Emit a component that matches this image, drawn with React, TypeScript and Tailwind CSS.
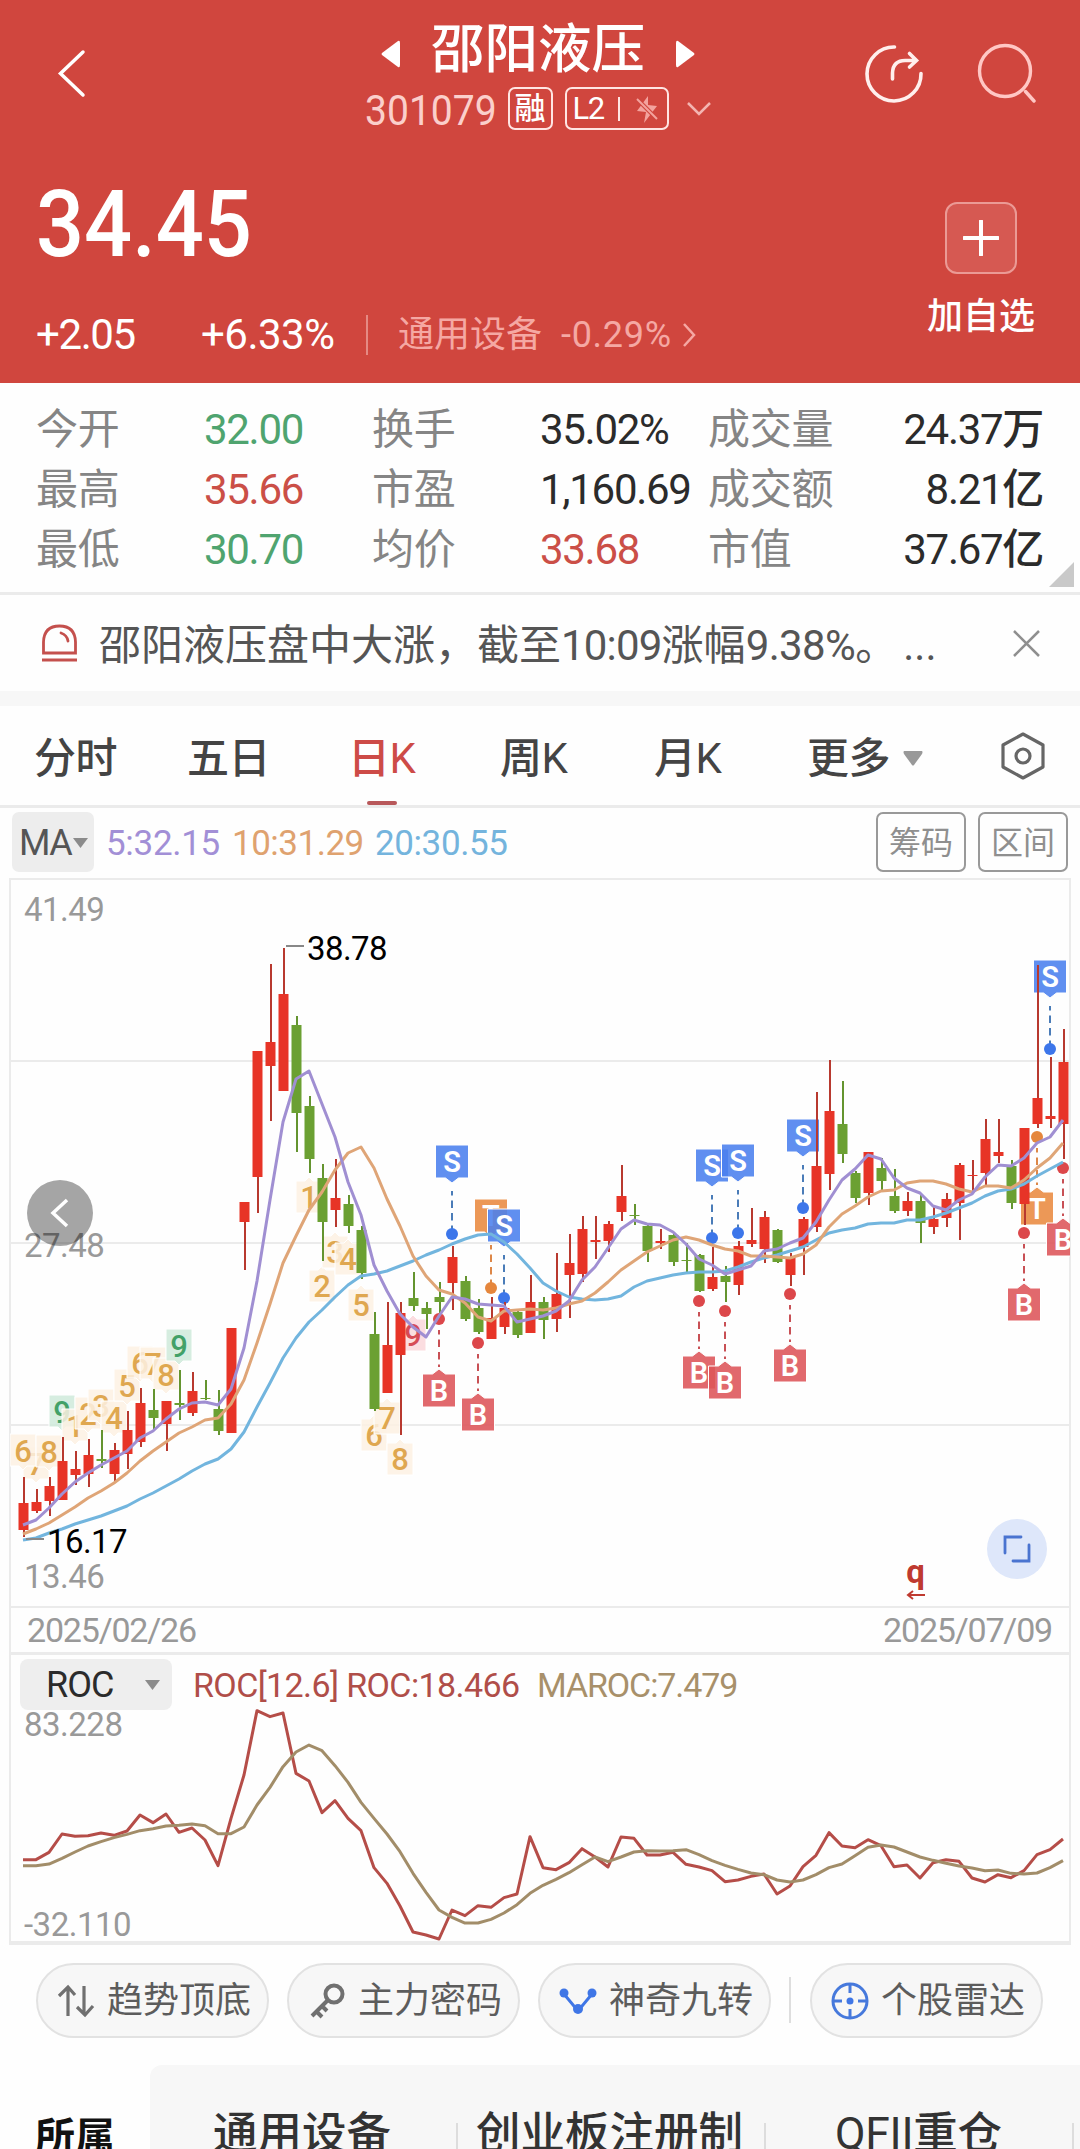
import type { ReactNode } from "react";

type Candle = [dir: "R" | "G", high: number, top: number, bottom: number, low: number];
type Signal = { i: number; type: "S" | "B" | "T"; y: number; below?: boolean };
type Tag = { i: number; n: string; y: number; below?: boolean; tone?: "green" | "red" };

const RED = "#e73427";
const GREEN = "#6ba032";

// one slot every 13px, values are y coordinates inside the chart viewBox
const candles: Candle[] = [
  ["R", 1477, 1503, 1530, 1537], ["R", 1489, 1502, 1511, 1513], ["R", 1477, 1486, 1501, 1516],
  ["R", 1437, 1461, 1500, 1500], ["R", 1451, 1469, 1475, 1485], ["R", 1439, 1455, 1474, 1487],
  ["G", 1430, 1459, 1461, 1468], ["R", 1443, 1450, 1474, 1483], ["R", 1411, 1430, 1454, 1469],
  ["R", 1388, 1403, 1442, 1447], ["G", 1389, 1410, 1418, 1429], ["R", 1401, 1401, 1424, 1451],
  ["G", 1370, 1403, 1405, 1420], ["R", 1372, 1391, 1413, 1416], ["G", 1380, 1398, 1399, 1400],
  ["G", 1390, 1409, 1431, 1435], ["R", 1328, 1328, 1433, 1433], ["R", 1202, 1202, 1222, 1270],
  ["R", 1051, 1051, 1177, 1213], ["R", 964, 1042, 1066, 1121], ["R", 948, 994, 1091, 1091],
  ["G", 1016, 1025, 1113, 1152], ["G", 1096, 1106, 1159, 1173], ["G", 1164, 1178, 1222, 1261],
  ["R", 1159, 1198, 1210, 1227], ["G", 1195, 1204, 1226, 1233], ["G", 1226, 1230, 1273, 1279],
  ["G", 1312, 1334, 1409, 1411], ["R", 1302, 1345, 1393, 1393], ["R", 1302, 1313, 1355, 1435],
  ["G", 1272, 1298, 1306, 1311], ["G", 1302, 1308, 1314, 1329], ["G", 1282, 1297, 1302, 1315],
  ["R", 1246, 1257, 1283, 1310], ["G", 1276, 1281, 1319, 1321], ["G", 1299, 1308, 1332, 1334],
  ["R", 1297, 1318, 1339, 1339], ["R", 1302, 1308, 1327, 1334], ["G", 1310, 1312, 1335, 1338],
  ["R", 1275, 1302, 1333, 1333], ["G", 1297, 1302, 1320, 1339], ["R", 1253, 1294, 1319, 1332],
  ["R", 1234, 1263, 1275, 1318], ["R", 1216, 1229, 1274, 1282], ["R", 1216, 1240, 1242, 1259],
  ["R", 1221, 1224, 1241, 1252], ["R", 1165, 1196, 1212, 1221], ["G", 1204, 1215, 1216, 1225],
  ["G", 1223, 1226, 1251, 1262], ["R", 1229, 1241, 1243, 1249], ["G", 1232, 1235, 1262, 1266],
  ["G", 1243, 1260, 1261, 1272], ["G", 1254, 1255, 1291, 1292], ["R", 1247, 1277, 1289, 1291],
  ["G", 1266, 1276, 1282, 1302], ["R", 1241, 1246, 1285, 1295], ["R", 1208, 1240, 1244, 1247],
  ["R", 1211, 1217, 1249, 1263], ["G", 1229, 1230, 1262, 1263], ["R", 1253, 1257, 1275, 1286],
  ["R", 1217, 1219, 1247, 1275], ["R", 1092, 1166, 1227, 1232], ["R", 1060, 1111, 1174, 1190],
  ["G", 1081, 1124, 1154, 1163], ["G", 1171, 1173, 1198, 1203], ["R", 1152, 1152, 1193, 1205],
  ["G", 1158, 1168, 1181, 1190], ["G", 1169, 1196, 1211, 1213], ["R", 1192, 1201, 1211, 1216],
  ["G", 1193, 1201, 1223, 1243], ["R", 1207, 1219, 1227, 1234], ["R", 1193, 1199, 1218, 1227],
  ["R", 1163, 1165, 1203, 1240], ["R", 1160, 1175, 1176, 1192], ["R", 1119, 1139, 1173, 1187],
  ["R", 1119, 1152, 1156, 1163], ["G", 1160, 1166, 1203, 1209], ["R", 1128, 1128, 1204, 1225],
  ["R", 965, 1098, 1124, 1128], ["R", 1057, 1116, 1119, 1128], ["R", 1029, 1062, 1124, 1159],
];

const ma5 = [
  1525, 1520, 1508, 1494, 1482, 1473, 1465, 1458, 1451, 1438, 1431, 1419, 1409, 1403, 1402, 1405, 1389, 1348, 1281, 1200,
  1122, 1079, 1071, 1104, 1137, 1182, 1215, 1265, 1291, 1314, 1327, 1337, 1316, 1297, 1299, 1304, 1305, 1306, 1322, 1319,
  1316, 1311, 1301, 1280, 1267, 1248, 1229, 1220, 1224, 1225, 1232, 1244, 1259, 1265, 1274, 1270, 1266, 1251, 1249, 1243,
  1238, 1222, 1200, 1180, 1169, 1155, 1159, 1178, 1188, 1193, 1206, 1210, 1200, 1194, 1177, 1165, 1166, 1158, 1143, 1137, 1120,
];

const ma10 = [
  1534, 1529, 1523, 1515, 1507, 1498, 1491, 1483, 1473, 1461, 1451, 1442, 1433, 1427, 1420, 1418, 1404, 1380, 1343, 1304,
  1263, 1236, 1210, 1192, 1170, 1153, 1147, 1168, 1199, 1226, 1256, 1276, 1290, 1294, 1303, 1317, 1321, 1311, 1310, 1309,
  1310, 1308, 1304, 1301, 1293, 1282, 1270, 1261, 1252, 1246, 1240, 1237, 1240, 1245, 1249, 1251, 1256, 1256, 1257, 1258,
  1254, 1245, 1227, 1214, 1206, 1197, 1191, 1190, 1183, 1181, 1181, 1184, 1189, 1192, 1186, 1186, 1188, 1180, 1168, 1158, 1143,
];

const ma20 = [
  1540, 1538, 1533, 1529, 1524, 1520, 1516, 1511, 1506, 1499, 1493, 1486, 1479, 1471, 1464, 1459, 1449, 1432, 1407, 1383,
  1358, 1338, 1322, 1310, 1297, 1285, 1276, 1274, 1271, 1266, 1261, 1255, 1250, 1244, 1239, 1235, 1234, 1242, 1254, 1268,
  1283, 1291, 1297, 1299, 1300, 1299, 1296, 1287, 1281, 1278, 1275, 1273, 1272, 1272, 1271, 1267, 1262, 1258, 1255, 1251,
  1247, 1240, 1233, 1230, 1228, 1224, 1223, 1223, 1220, 1220, 1217, 1213, 1208, 1203, 1196, 1191, 1189, 1184, 1176, 1169, 1162,
];

const roc = [
  779, 779, 757, 702, 709, 707, 699, 706, 693, 645, 668, 642, 697, 684, 720, 797, 655, 525, 332, 350, 339, 520, 543, 638,
  602, 655, 692, 803, 850, 918, 996, 1005, 1017, 930, 947, 917, 922, 893, 882, 710, 803, 809, 788, 746, 771, 801, 711, 715,
  765, 765, 757, 793, 801, 812, 845, 840, 829, 822, 882, 858, 800, 766, 698, 738, 743, 719, 737, 800, 795, 834, 788, 779,
  784, 834, 846, 824, 833, 812, 764, 749, 717,
];

const maroc = [
  797, 797, 792, 775, 756, 738, 725, 713, 703, 692, 686, 678, 676, 672, 677, 701, 701, 681, 615, 562, 500, 456, 435, 452,
  497, 547, 607, 655, 702, 755, 820, 877, 930, 952, 969, 969, 958, 939, 914, 880, 856, 838, 818, 794, 771, 785, 771, 756,
  752, 753, 752, 749, 764, 782, 796, 808, 819, 824, 840, 846, 840, 824, 803, 792, 767, 742, 735, 741, 756, 771, 781, 790,
  798, 804, 812, 810, 820, 822, 819, 803, 782,
];

const signals: Signal[] = [
  { i: 32, type: "B", y: 1319 },
  { i: 33, type: "S", y: 1234 },
  { i: 35, type: "B", y: 1343 },
  { i: 36, type: "T", y: 1288 },
  { i: 37, type: "S", y: 1298 },
  { i: 52, type: "B", y: 1301 },
  { i: 53, type: "S", y: 1238 },
  { i: 54, type: "B", y: 1311 },
  { i: 55, type: "S", y: 1233 },
  { i: 59, type: "B", y: 1294 },
  { i: 60, type: "S", y: 1208 },
  { i: 77, type: "B", y: 1233 },
  { i: 78, type: "T", y: 1137, below: true },
  { i: 79, type: "S", y: 1049 },
  { i: 80, type: "B", y: 1168 },
];

const tags: Tag[] = [
  { i: 1, n: "7", y: 1464 },
  { i: 0, n: "6", y: 1451 },
  { i: 2, n: "8", y: 1452 },
  { i: 3, n: "9", y: 1412, tone: "green" },
  { i: 4, n: "1", y: 1426 },
  { i: 5, n: "2", y: 1414 },
  { i: 6, n: "3", y: 1406 },
  { i: 7, n: "4", y: 1418 },
  { i: 8, n: "5", y: 1386 },
  { i: 9, n: "6", y: 1363 },
  { i: 10, n: "7", y: 1364 },
  { i: 11, n: "8", y: 1375 },
  { i: 12, n: "9", y: 1346, tone: "green" },
  { i: 22, n: "1", y: 1197, below: true },
  { i: 23, n: "2", y: 1286, below: true },
  { i: 24, n: "3", y: 1252, below: true },
  { i: 25, n: "4", y: 1259, below: true },
  { i: 26, n: "5", y: 1305, below: true },
  { i: 27, n: "6", y: 1435, below: true },
  { i: 28, n: "7", y: 1418, below: true },
  { i: 29, n: "8", y: 1459, below: true },
  { i: 30, n: "9", y: 1335, below: true, tone: "red" },
];

const slotX = (i: number) => 23 + i * 13;
const toPoints = (ys: number[]) => ys.map((y, i) => `${slotX(i)},${y}`).join(" ");

function SignalMark({ i, type, y, below }: Signal) {
  const x = slotX(i);
  const down = type === "B" || below;
  const box = down ? y + 55 : y - 89;
  const fill = type === "S" ? "#4a80ee" : type === "B" ? "#dd5459" : "#e98a40";
  const dot = type === "S" ? "#3c76ea" : type === "B" ? "#dc474a" : "#e5863c";
  const line = type === "S" ? "#4a7cb8" : type === "B" ? "#c85055" : "#dd8748";
  const tip = down
    ? `M${x - 16.5} ${box}h10l6.5 -5l6.5 5h10v33h-33z`
    : `M${x - 16.5} ${box}h33v33h-10l-6.5 5l-6.5 -5h-10z`;

  return (
    <g>
      <line x1={x} x2={x} y1={down ? y + 11 : y - 43} y2={down ? y + 48 : y - 4} stroke={line} strokeWidth="2" strokeDasharray="7.5 5" strokeDashoffset="3" />
      <path d={tip} fill={fill} fillOpacity="0.88" stroke="#fff" strokeWidth="1" />
      <text x={x} y={box + 26.5} textAnchor="middle" fontSize="29" fontWeight="600" fill="#fff">
        {type}
      </text>
      <circle cx={x} cy={y} r="6" fill={dot} />
    </g>
  );
}

function NumberTag({ i, n, y, below, tone }: Tag) {
  const x = slotX(i);
  const fill = tone === "green" ? "#cfeadb" : tone === "red" ? "#fad7da" : "#fdf1e3";
  const color = tone === "green" ? "#42a168" : tone === "red" ? "#d64b55" : "#dfa750";
  const d = below
    ? `M${x - 13} ${y - 16}h9l4 -4l4 4h9v32h-26z`
    : `M${x - 13} ${y - 17}h26v32h-9l-4 4l-4 -4h-9z`;

  return (
    <g>
      <path d={d} fill={fill} fillOpacity="0.85" stroke="#fff" strokeWidth="1" />
      <text x={x} y={y + 11} textAnchor="middle" fontSize="31" fontWeight="500" fill={color}>
        {n}
      </text>
    </g>
  );
}

function PriceChart() {
  return (
    <svg className="block w-full" height="731" viewBox="0 877 1080 731">
      <defs>
        <clipPath id="plot">
          <rect x="10" y="878" width="1060" height="730" />
        </clipPath>
      </defs>
      <path d="M9 879H1071M10 1061H1070M10 1243H1070M10 1425H1070M10 1607H1070M10 878V1608M1070 878V1608" fill="none" stroke="#ebebeb" strokeWidth="2" />
      <g fill="#999" fontSize="33" fontWeight="450" letterSpacing="-0.5">
        <text x="24" y="921">41.49</text>
        <text x="24" y="1257">27.48</text>
        <text x="24" y="1588">13.46</text>
      </g>
      <circle cx="60" cy="1213" r="33" fill="#000" fillOpacity="0.35" />
      <path d="M67 1200L53 1213L67 1226" fill="none" stroke="#fff" strokeWidth="3.5" />

      <g clipPath="url(#plot)">
        {tags.map((tag) => (
          <NumberTag key={tag.i} {...tag} />
        ))}
        {signals.map((s) => (
          <SignalMark key={s.i} {...s} />
        ))}
        {candles.map(([dir, high, top, bottom, low], i) => (
          <g key={i}>
            <line x1={slotX(i) + 1} x2={slotX(i) + 1} y1={high} y2={low} stroke={dir === "R" ? "#b8392f" : "#64942f"} strokeWidth="2" />
            <rect x={slotX(i) - 4.5} y={top} width="10" height={bottom - top} fill={dir === "R" ? RED : GREEN} />
          </g>
        ))}
        <g fill="none" strokeWidth="3" strokeLinejoin="round">
          <polyline points={toPoints(ma20)} stroke="#72b5de" />
          <polyline points={toPoints(ma10)} stroke="#dfa577" />
          <polyline points={toPoints(ma5)} stroke="#a08fd2" />
        </g>
      </g>

      <path d="M286 946H304M26 1539H44" stroke="#888" strokeWidth="2" />
      <g fill="#000" fontSize="33" fontWeight="450" letterSpacing="-0.6">
        <text x="307" y="960">38.78</text>
        <text x="47" y="1553">16.17</text>
      </g>

      <text x="915.5" y="1583" textAnchor="middle" fontSize="33" fontWeight="700" fill="#bf3a30">
        q
      </text>
      <path d="M925 1595H908M913 1591L908 1595L913 1599" fill="none" stroke="#bf3a30" strokeWidth="2" />
      <circle cx="1017" cy="1549" r="30" fill="#dee7fa" />
      <path d="M1021 1537H1005V1553M1013 1561H1029V1545" fill="none" stroke="#4a74d0" strokeWidth="2.8" strokeLinecap="round" />
    </svg>
  );
}

function RocChart() {
  return (
    <svg className="block w-full overflow-visible" height="233" viewBox="0 1712 1080 233">
      <path d="M10 1712V1944M1070 1712V1944" stroke="#ebebeb" strokeWidth="2" />
      <path d="M9 1943H1071" stroke="#ebebeb" strokeWidth="4" />
      <g fill="#999" fontSize="33" fontWeight="450" letterSpacing="-0.5">
        <text x="24" y="1736">83.228</text>
        <text x="24" y="1936">-32.110</text>
      </g>
      <g fill="none" strokeWidth="3" strokeLinejoin="round">
        <polyline points={toPoints(roc.map((v) => 1600 + v / 3))} stroke="#b54d48" />
        <polyline points={toPoints(maroc.map((v) => 1600 + v / 3))} stroke="#a28d69" />
      </g>
    </svg>
  );
}

function Header() {
  return (
    <header className="h-[383px] bg-[#d0463e] text-white">
      <div className="flex h-[146px] items-start justify-between pr-[44px] pl-[56px]">
        <svg className="mt-[49px]" width="156" height="50" viewBox="0 0 156 50" fill="none">
          <path d="M27 3L4.500 24.500L27 46" stroke="#fff" strokeWidth="3.5" strokeLinecap="round" />
        </svg>
        <div className="flex flex-col items-center">
          <div className="mt-[19px] flex h-[61px] items-center gap-[31px]">
            <svg className="mt-[8px]" width="19" height="28" viewBox="0 0 19 28" fill="#fff">
              <path d="M17 1Q19 0 19 3V25Q19 28 17 27L1 15Q0 14 1 13Z" />
            </svg>
            <h1 className="text-[53.5px] leading-[60px] font-medium">邵阳液压</h1>
            <svg className="mt-[8px]" width="19" height="28" viewBox="0 0 19 28" fill="#fff">
              <path d="M2 1Q0 0 0 3V25Q0 28 2 27L18 15Q19 14 18 13Z" />
            </svg>
          </div>
          <div className="mt-[7px] flex h-[43px] items-center">
            <span className="mr-[2px] w-[141px]">
              <span className="inline-block origin-left scale-x-[0.93] pt-[3px] text-[42px] leading-[43px] text-[#fbcfcb]">301079</span>
            </span>
            <span className="flex h-[43px] w-[45px] items-center justify-center rounded-[7px] border-[2.5px] border-[#ffe5e3] text-[31px] leading-none font-medium">
              融
            </span>
            <span className="ml-[12px] flex h-[43px] w-[104px] items-center rounded-[7px] border-[2.5px] border-[#ffe5e3] pl-[6px] text-[31px] leading-none font-[450] tracking-[-1.5px]">
              L2
              <span className="ml-[14px] h-[24px] w-[2px] bg-[#ffe5e3]" />
              <svg className="ml-[15px]" width="24" height="30" viewBox="0 0 24 30">
                <path d="M13 2V11L22 12L9 29L11 18L2 17Z" fill="#f3a39e" />
                <path d="M3 6L21 24" stroke="#d0463e" strokeWidth="4" />
                <path d="M2 5L22 25" stroke="#f3a39e" strokeWidth="2" />
              </svg>
            </span>
            <svg className="ml-[17px]" width="26" height="16" viewBox="0 0 26 16" fill="none">
              <path d="M2 2L13 13L24 2" stroke="#f3b5b1" strokeWidth="2.5" />
            </svg>
          </div>
        </div>
        <div className="flex gap-[52px] pt-[42px]">
          <svg width="60" height="62" viewBox="864 42 60 62" fill="none" stroke="#ffefed" strokeWidth="3.6" strokeLinecap="round">
            <path d="M894.5 47A27 27 0 1 0 921 73.500" />
            <path d="M892.500 79V73Q893 60 906 60.500H916M909.500 53.500L916.500 60.500L909.500 67" />
          </svg>
          <svg width="60" height="62" viewBox="976 42 60 62" fill="none" stroke="#ffc7c4" strokeWidth="3.4" strokeLinecap="round">
            <circle cx="1005" cy="71" r="25.500" />
            <path d="M1025.500 91.500L1034 101" />
          </svg>
        </div>
      </div>
      <div className="flex h-[237px] justify-between pr-[45px] pl-[36px]">
        <div>
          <div className="mt-[26px] h-[106px]">
            <span className="inline-block origin-left scale-x-[0.91] text-[93px] leading-[106px] font-medium">34.45</span>
          </div>
          <div className="mt-[34px] flex h-[46px] items-center text-[42px] leading-[46px] font-[450] tracking-[-1.4px]">
            <span className="w-[165px]">+2.05</span>
            <span className="w-[165px] tracking-[-0.5px]">+6.33%</span>
            <span className="h-[40px] w-[2px] bg-[#e58a84]" />
            <span className="ml-[30px] w-[163px] text-[36px] font-normal tracking-normal text-[#f5a8a3]">通用设备</span>
            <span className="w-[121px] text-[36px] font-normal tracking-[0.7px] text-[#f5a8a3]">-0.29%</span>
            <svg width="14" height="26" viewBox="0 0 14 26" fill="none">
              <path d="M2 2L12 13L2 24" stroke="#f5a8a3" strokeWidth="2.5" />
            </svg>
          </div>
        </div>
        <div className="flex flex-col items-center pt-[56px]">
          <button type="button" className="flex h-[72px] w-[72px] items-center justify-center rounded-[12px] border-2 border-[#eb9a95] bg-[#d65952]">
            <svg width="36" height="36" viewBox="0 0 36 36">
              <path d="M18 1V35M1 18H35" stroke="#fff" strokeWidth="4" strokeLinecap="round" />
            </svg>
          </button>
          <span className="mt-[21px] text-[36px] leading-[44px] font-medium">加自选</span>
        </div>
      </div>
    </header>
  );
}

const stats = [
  ["今开", "32.00", "text-[#4fa46f]", "换手", "35.02%", "text-[#2b2b2b]", "成交量", "24.37万"],
  ["最高", "35.66", "text-[#cb4f47]", "市盈", "1,160.69", "text-[#2b2b2b]", "成交额", "8.21亿"],
  ["最低", "30.70", "text-[#4fa46f]", "均价", "33.68", "text-[#cb4f47]", "市值", "37.67亿"],
];

function Stats() {
  return (
    <section className="relative h-[212px] border-b-[3px] border-[#ebebeb] pt-[17px] pr-[37px] pl-[36px] text-[42px] leading-[60px] font-[450] tracking-[-1.3px]">
      {stats.map(([a, av, ac, b, bv, bc, c, cv]) => (
        <div key={a} className="grid h-[60px] grid-cols-[168px_168px_168px_168px_1fr] whitespace-nowrap">
          <span className="font-normal tracking-[-0.3px] text-[#858585]">{a}</span>
          <span className={ac}>{av}</span>
          <span className="font-normal tracking-[-0.3px] text-[#858585]">{b}</span>
          <span className={bc}>{bv}</span>
          <span className="flex justify-between">
            <span className="font-normal tracking-[-0.3px] text-[#858585]">{c}</span>
            <span className="text-[#2b2b2b]">{cv}</span>
          </span>
        </div>
      ))}
      <svg className="absolute right-[6px] bottom-[5px]" width="25" height="25" viewBox="0 0 25 25">
        <path d="M25 0V25H0Z" fill="#c9c9c9" />
      </svg>
    </section>
  );
}

function Notice() {
  return (
    <section className="flex h-[96px] items-center pr-[40px] pl-[41px]">
      <svg width="37" height="38" viewBox="0 0 37 38" fill="none" stroke="#c4504d" strokeWidth="2.8">
        <path d="M2.500 29V18Q3 2 18.500 2Q34 2 34.500 18V29ZM1 36H36" />
        <path d="M20 9Q26 11 27 17" strokeLinecap="round" />
      </svg>
      <p className="ml-[21px] flex-1 pt-[5px] text-[42px] leading-[60px] whitespace-nowrap text-[#555]">
        邵阳液压盘中大涨，截至<span className="tracking-[-0.8px]">10:09</span>涨幅<span className="tracking-[-0.6px]">9.38%</span>。
        <span className="ml-[6px]">...</span>
      </p>
      <svg width="27" height="27" viewBox="0 0 27 27">
        <path d="M1 1L26 26M26 1L1 26" stroke="#8f8f8f" strokeWidth="2.5" />
      </svg>
    </section>
  );
}

function Tabs() {
  return (
    <nav className="flex h-[102px] items-start border-b-[3px] border-[#ebebeb] pl-[34px] text-[42px] leading-[105px] font-[450] tracking-[-0.5px] text-[#444]">
      <span className="w-[153px]">分时</span>
      <span className="w-[161px]">五日</span>
      <span className="flex w-[152px] flex-col text-[#cd4b47]">
        <span className="h-[95px]">日K</span>
        <span className="ml-[19px] h-[4px] w-[30px] rounded-sm bg-[#b8585a]" />
      </span>
      <span className="w-[154px]">周K</span>
      <span className="w-[153px]">月K</span>
      <span className="flex w-[194px] items-center gap-[13px]">
        更多
        <svg width="20" height="15" viewBox="0 0 20 15">
          <path d="M1 0H19Q20 1 19 3L11 14Q10 15 9 14L1 3Q0 1 1 0Z" fill="#999" />
        </svg>
      </span>
      <svg className="mt-[26px]" width="44" height="48" viewBox="0 0 44 48" fill="none" stroke="#666" strokeWidth="3.200" strokeLinejoin="round">
        <path d="M22 2L42 13V35L22 46L2 35V13Z" />
        <circle cx="22" cy="24" r="7" />
      </svg>
    </nav>
  );
}

function OutlineButton({ children }: { children: ReactNode }) {
  return (
    <button type="button" className="h-[60px] w-[90px] rounded-[7px] border-2 border-[#999] text-[32px] leading-[58px] font-normal text-[#8f8f8f]">
      {children}
    </button>
  );
}

function MaBar() {
  return (
    <div className="flex h-[69px] items-start pt-[4px] pr-[12px] pl-[12px] text-[35px] leading-[64px] font-[450]">
      <div className="mr-[12px] flex h-[60px] w-[82px] items-center rounded-[7px] bg-[#ededed] pt-[2px] pl-[7px] text-[36px] tracking-[-1.5px] text-[#555]">
        MA
        <svg className="ml-[2px]" width="15" height="10" viewBox="0 0 15 10">
          <path d="M0 0H15L7.500 10Z" fill="#8b8b8b" />
        </svg>
      </div>
      <span className="w-[126px] tracking-[-0.3px] text-[#a28fd6]">5:32.15</span>
      <span className="w-[143px] tracking-[-0.5px] text-[#dfa26f]">10:31.29</span>
      <span className="tracking-[-0.4px] text-[#74b4dd]">20:30.55</span>
      <div className="ml-auto flex gap-[12px]">
        <OutlineButton>筹码</OutlineButton>
        <OutlineButton>区间</OutlineButton>
      </div>
    </div>
  );
}

function Pill({ icon, children }: { icon: ReactNode; children: ReactNode }) {
  return (
    <button type="button" className="flex h-[75px] w-[233px] items-center gap-[12px] rounded-full border-2 border-[#e2e2e2] bg-[#f7f7f7] pl-[19px] text-[36px] whitespace-nowrap text-[#5c5c5c]">
      {icon}
      {children}
    </button>
  );
}

function ToolPills() {
  return (
    <div className="flex h-[94px] items-start pt-[18px] pl-[36px]">
      <Pill
        icon={
          <svg width="38" height="38" viewBox="0 0 38 38" fill="none" stroke="#707070" strokeWidth="3.200">
            <path d="M11 34V6M2 14L11 5L18 13M27 4V32M20 25L28 33L36 24" />
          </svg>
        }
      >
        趋势顶底
      </Pill>
      <div className="ml-[18px]">
        <Pill
          icon={
            <svg width="38" height="38" viewBox="0 0 38 38" fill="none" stroke="#707070" strokeWidth="4">
              <circle cx="26" cy="12" r="8.500" />
              <path d="M20 18L4 34M8 29L14 35M14 24L19 29" />
            </svg>
          }
        >
          主力密码
        </Pill>
      </div>
      <div className="ml-[18px]">
        <Pill
          icon={
            <svg width="38" height="38" viewBox="0 0 38 38" fill="#3f76e6">
              <path d="M5 12L19 29L33 12" fill="none" stroke="#3f76e6" strokeWidth="3" />
              <circle cx="5" cy="11" r="4.500" />
              <circle cx="33" cy="11" r="4.500" />
              <circle cx="19" cy="27" r="5" />
            </svg>
          }
        >
          神奇九转
        </Pill>
      </div>
      <span className="mt-[14px] ml-[18px] h-[46px] w-[2px] bg-[#dedede]" />
      <div className="ml-[19px]">
        <Pill
          icon={
            <svg width="38" height="38" viewBox="0 0 38 38" fill="none" stroke="#4679dc" strokeWidth="3">
              <circle cx="19" cy="19" r="17" />
              <path d="M19 2V11M19 27V36M2 19H11M27 19H36" />
              <circle cx="19" cy="19" r="3.500" fill="#3f76e6" stroke="none" />
            </svg>
          }
        >
          个股雷达
        </Pill>
      </div>
    </div>
  );
}

function Sectors() {
  return (
    <div className="mt-[26px] flex h-[84px] overflow-hidden">
      <div className="w-[150px] pt-[47px] pl-[35px] text-[40px] leading-[52px] font-bold text-[#111]">所属</div>
      <div className="flex flex-1 items-start rounded-tl-[12px] bg-[#f7f7f7] pt-[37px] text-[44.5px] leading-[64px] font-[450] whitespace-nowrap text-[#333]">
        <span className="w-[306px] pl-[63px]">通用设备</span>
        <span className="mt-[21px] h-[40px] w-[2px] bg-[#ddd]" />
        <span className="w-[306px] pl-[18px]">创业板注册制</span>
        <span className="mt-[21px] h-[40px] w-[2px] bg-[#ddd]" />
        <span className="w-[306px] pl-[69px] tracking-[-0.3px]">QFII重仓</span>
        <span className="mt-[21px] h-[40px] w-[2px] bg-[#ddd]" />
      </div>
    </div>
  );
}

export default function App() {
  return (
    <div className="h-[2149px] w-[1080px] overflow-hidden bg-[#fefefe] font-[Roboto,'Noto_Sans_CJK_SC',sans-serif]">
      <Header />
      <Stats />
      <Notice />
      <div className="h-[15px] bg-[#f7f7f7]" />
      <Tabs />
      <MaBar />
      <PriceChart />
      <div className="mx-[9px] flex h-[47px] items-center justify-between border-x-2 border-b-[3px] border-[#ebebeb] pr-[17px] pl-[16px] text-[34px] leading-[46px] font-[450] tracking-[-1.2px] text-[#999]">
        <span>2025/02/26</span>
        <span>2025/07/09</span>
      </div>
      <div className="mx-[9px] flex h-[57px] items-start border-x-2 border-[#ebebeb] pt-[4px] pl-[9px] text-[34px] leading-[52px] font-[450] tracking-[-0.6px]">
        <div className="mr-[21px] flex h-[51px] w-[152px] items-center justify-between rounded-[8px] bg-[#eee] pr-[12px] pl-[26px] text-[36px] tracking-[-1px] text-[#2b2b2b]">
          ROC
          <svg width="15" height="10" viewBox="0 0 15 10">
            <path d="M0 0H15L7.500 10Z" fill="#8b8b8b" />
          </svg>
        </div>
        <span className="w-[344px] text-[#b04e49]">ROC[12.6] ROC:18.466</span>
        <span className="tracking-[-1.1px] text-[#a8906a]">MAROC:7.479</span>
      </div>
      <RocChart />
      <ToolPills />
      <Sectors />
    </div>
  );
}
